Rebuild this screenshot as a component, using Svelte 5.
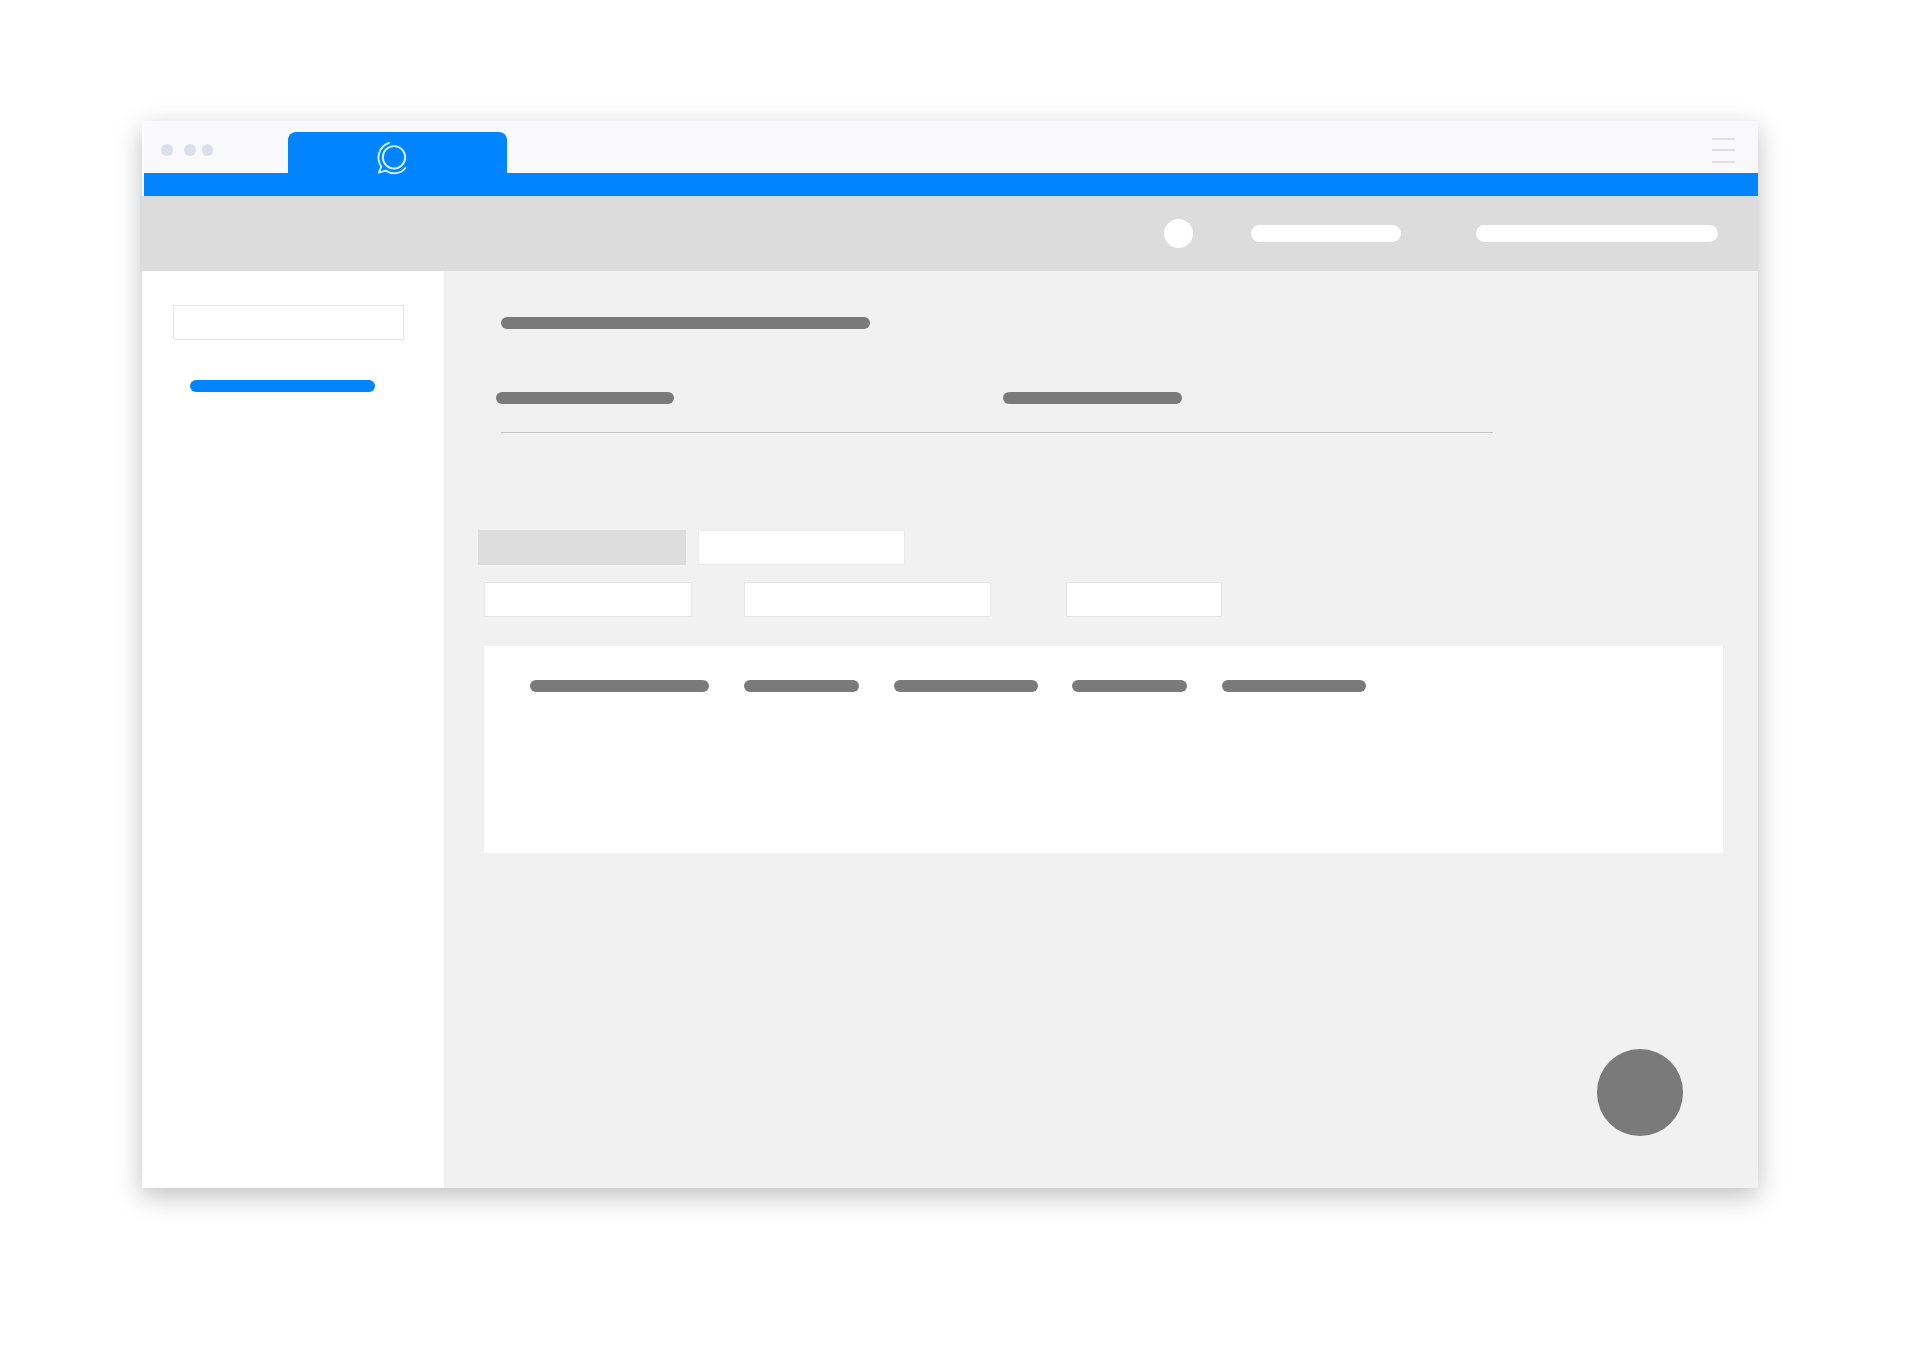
<script>
  const columns = [179, 115, 144, 115, 144];
</script>

<div class="stage">
<div class="window">
  <div class="chrome">
    <div class="dots"><i></i><i></i><i></i></div>
    <div class="tab">
      <svg width="30" height="34" viewBox="0 0 30 34" fill="none" stroke="#d3f5ff" stroke-width="1.9" stroke-linecap="round" stroke-linejoin="round">
        <circle cx="17" cy="16.3" r="11.2" />
        <path d="M12 1.8C1.5 5.5-1.2 17.2 4.3 25.7L1.8 31.6L8.7 29.6C15.5 34 24 32.8 28.3 27" />
      </svg>
    </div>
    <div class="menu"><i></i><i></i><i></i></div>
  </div>
  <div class="strip"></div>
  <header>
    <span class="avatar"></span>
    <span class="white short"></span>
    <span class="white long"></span>
  </header>
  <div class="body">
    <aside>
      <div class="box search"></div>
      <div class="bar link"></div>
    </aside>
    <main>
      <div class="bar title"></div>
      <div class="fields">
        <div class="bar field"></div>
        <div class="bar field"></div>
      </div>
      <div class="rule"></div>
      <div class="tabs">
        <div class="box active"></div>
        <div class="box idle"></div>
      </div>
      <div class="filters">
        <div class="box one"></div>
        <div class="box two"></div>
        <div class="box three"></div>
      </div>
      <section>
        {#each columns as width}
          <div class="bar" style="width: {width}px"></div>
        {/each}
      </section>
      <div class="fab"></div>
    </main>
  </div>
</div>
</div>

<style>
  :global(body) { background: #fff; }
  div, aside, main, section, header, span { box-sizing: border-box; }
  .stage { height: 1348px; padding: 121px 0 0 142px; overflow: hidden; }
  .window {
    width: 1616px;
    height: 1067px;
    display: flex;
    flex-direction: column;
    background: #fff;
    box-shadow: 0 8px 24px rgba(0, 0, 0, 0.25);
  }
  .chrome {
    height: 52px;
    flex: none;
    background: #f9f9fc;
    border-left: 2px solid #fff;
    display: flex;
    align-items: flex-start;
    position: relative;
    z-index: 1;
  }
  .dots { display: flex; margin: 23px 0 0 17.2px; width: 126.8px; }
  .dots i { width: 11.6px; height: 11.6px; border-radius: 50%; background: #dadfe9; margin-right: 5.8px; }
  .dots i:first-child { margin-right: 11.6px; }
  .tab {
    width: 219px;
    height: 41px;
    margin-top: 11px;
    border-radius: 8px 8px 0 0;
    background: #0084ff;
    padding: 9px 0 0 89.2px;
  }
  .tab svg { display: block; overflow: visible; }
  .menu { width: 23px; margin: 16.5px 23.5px 0 auto; display: grid; gap: 9.5px; }
  .menu i { height: 2px; background: #dde1e6; }
  .strip { height: 23px; flex: none; margin-left: 2px; background: #0084ff; }
  header {
    height: 75px;
    flex: none;
    margin-left: -2px;
    background: #dcdcdc;
    border-top: 1px solid #cfe0f2;
    display: flex;
    align-items: center;
    padding: 0 40px 1.4px 0;
    justify-content: flex-end;
  }
  header span { background: #fff; }
  .avatar { width: 29px; height: 29px; border-radius: 50%; margin-right: 57.5px; }
  .white { height: 17.3px; border-radius: 9px; }
  .short { width: 150px; margin-right: 75px; }
  .long { width: 242.5px; }
  .body { display: flex; flex: 1; }
  aside { width: 302px; padding: 34px 0 0 31px; }
  .box { background: #fff; border: 1px solid #e6e6e6; height: 35px; }
  .search { width: 231px; }
  .bar { height: 11.7px; border-radius: 6px; background: #7a7a7a; }
  .link { width: 184.7px; margin: 40.2px 0 0 17px; background: #0084ff; }
  main { flex: 1; background: #f1f1f1; padding: 46px 35px 0 34px; display: flex; flex-direction: column; }
  .title { width: 369px; margin-left: 23.4px; }
  .fields { display: flex; gap: 328.8px; margin: 63.2px 0 0 17.7px; }
  .field { width: 178.7px; }
  .rule { width: 991.5px; height: 1px; background: #c5c5c5; margin: 28px 0 0 23.4px; }
  .tabs { display: flex; gap: 12px; margin-top: 97.4px; }
  .tabs .box { width: 207.5px; height: 34.6px; }
  .tabs .active { background: #ddd; border-color: #ddd; }
  .tabs .idle { border-color: #ececec; }
  .filters { display: flex; margin: 17px 0 0 6px; }
  .one { width: 207.6px; margin-right: 52px; }
  .two { width: 247.5px; margin-right: 75.4px; }
  .three { width: 155.4px; }
  section {
    margin: 29px 0 0 5.6px;
    height: 207.5px;
    background: #fff;
    padding: 34.5px 0 0 46.6px;
    display: flex;
    gap: 34.7px;
  }
  .fab { width: 86.5px; height: 86.5px; border-radius: 50%; background: #7a7a7a; margin: 196px 39.8px 0 auto; }
</style>
